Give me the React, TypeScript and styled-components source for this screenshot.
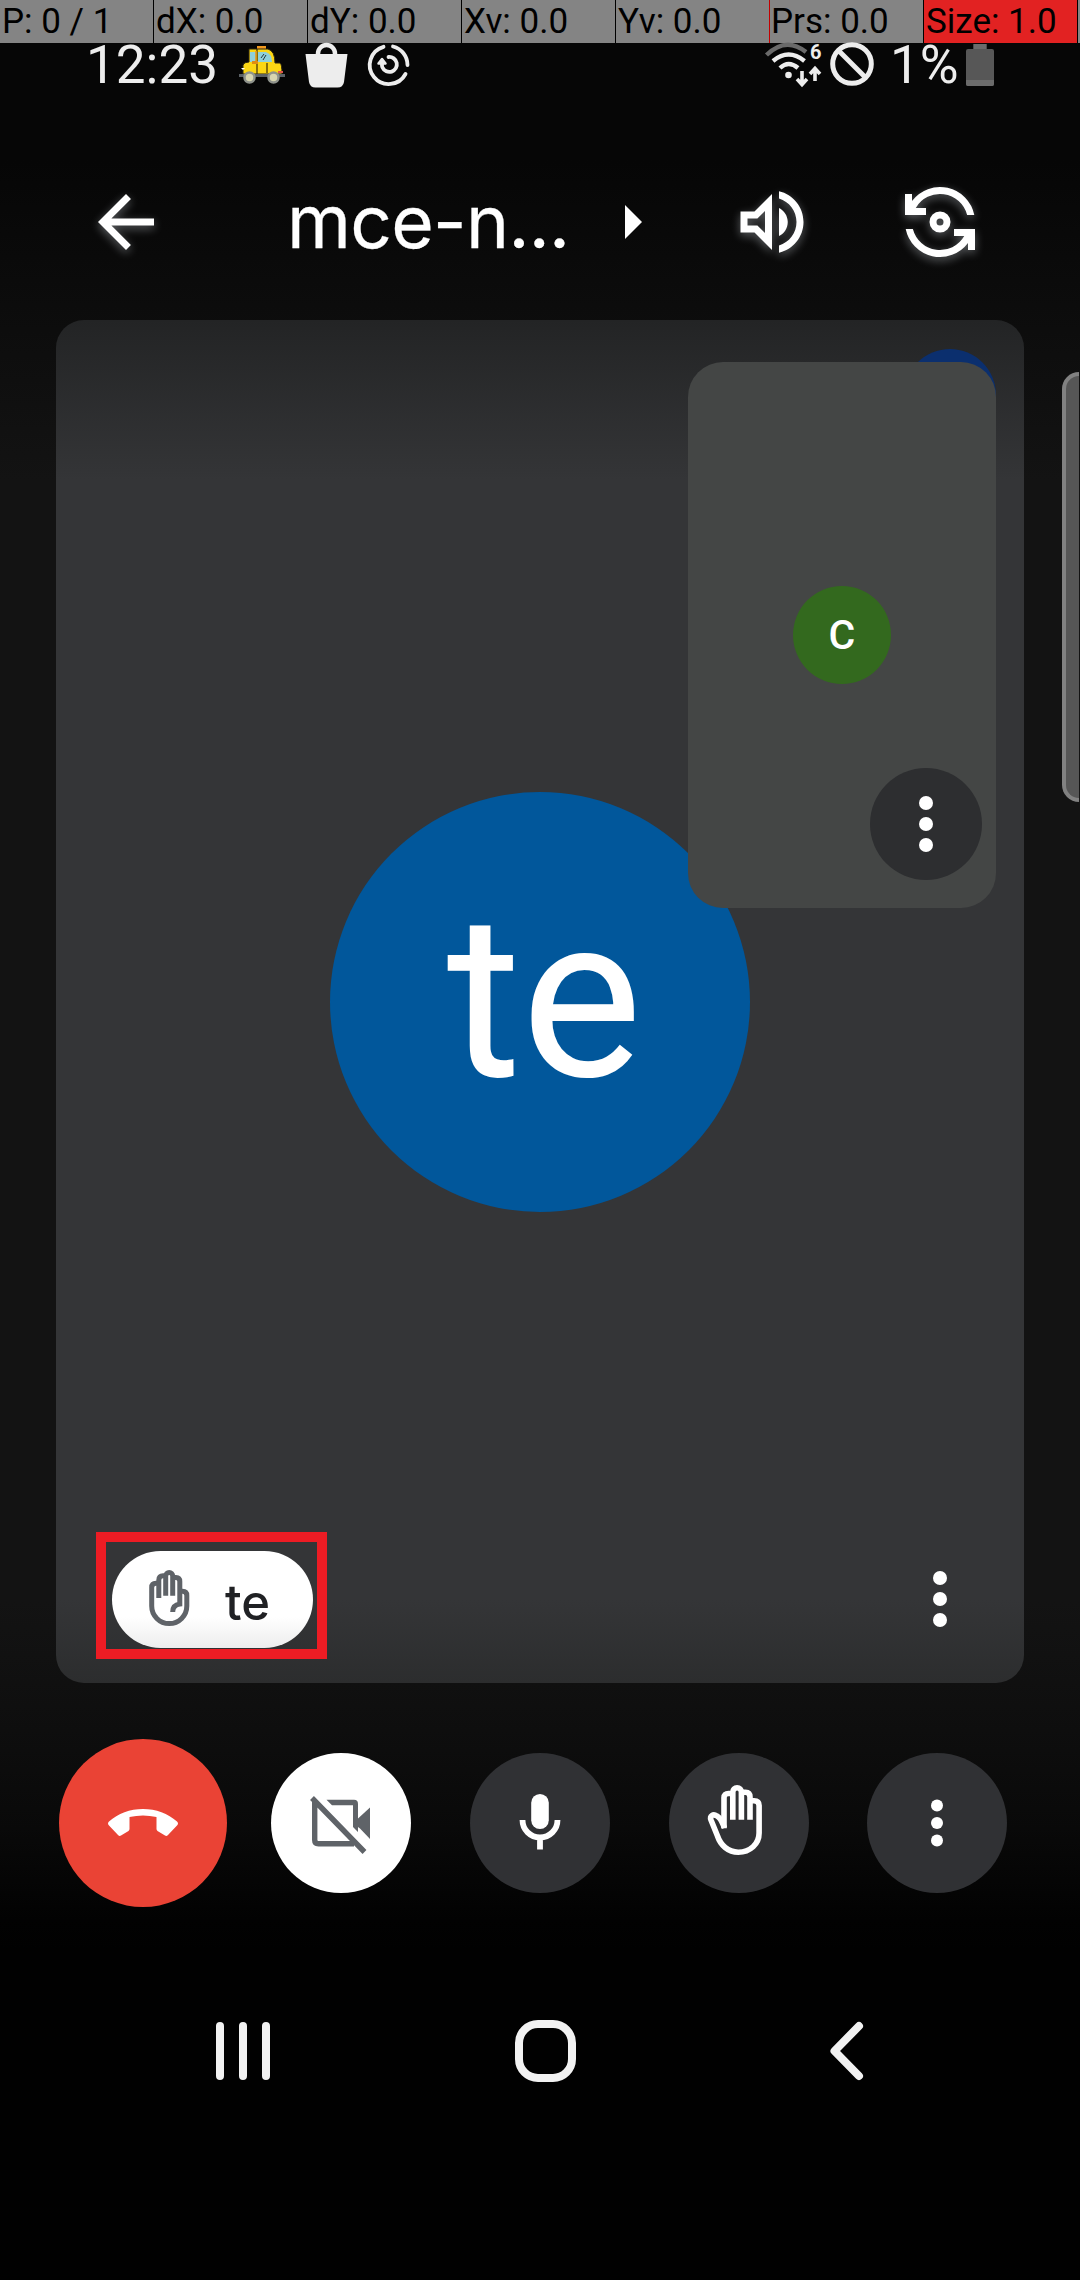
import React from "react";
import styled, { createGlobalStyle } from "styled-components";

const GlobalStyle = createGlobalStyle`
  * { box-sizing: border-box; }
  body { margin: 0; background: #000; }
  svg { display: block; flex: none; overflow: visible; }
`;

const Screen = styled.main`
  position: relative;
  display: flex;
  flex-direction: column;
  width: 1080px;
  height: 2280px;
  overflow: hidden;
  font-family: Roboto, "Liberation Sans", sans-serif;
  color: #fff;
  background: linear-gradient(
    to bottom,
    #060606 0,
    #060606 160px,
    #0d0d0d 330px,
    #131313 480px,
    #131313 1600px,
    #101010 1683px,
    #0e0e0e 1730px,
    #090909 1828px,
    #020202 1920px,
    #010101 1950px
  );
`;

const PointerBar = styled.div`
  display: grid;
  grid-template-columns: repeat(7, 153px) 1fr;
  column-gap: 1px;
  flex: none;
  height: 43px;
  background: #000;
`;

const PointerCell = styled.div<{ $alert?: boolean; $mark?: boolean }>`
  display: flex;
  align-items: center;
  padding-left: ${(p) => (p.$mark ? 1 : 2)}px;
  font-size: 35px;
  line-height: 42px;
  white-space: pre;
  color: #000;
  background: ${(p) => (p.$alert ? "#e22222" : "#848484")};
  box-shadow: ${(p) => (p.$mark ? "-1px 0 0 #c40000" : "none")};
`;

const StatusBar = styled.div`
  position: relative;
  display: flex;
  align-items: center;
  flex: none;
  height: 44px;
  padding: 0 86px;
  color: #ededed;
`;

const StatusText = styled.span<{ $width: number; $indent?: number }>`
  width: ${(p) => p.$width}px;
  padding-left: ${(p) => p.$indent ?? 0}px;
  font-size: 53px;
  line-height: 44px;
  white-space: nowrap;
`;

const StatusGroup = styled.div<{ $gap: number; $push?: boolean }>`
  display: flex;
  align-items: center;
  gap: ${(p) => p.$gap}px;
  margin-left: ${(p) => (p.$push ? "auto" : "0")};
`;

const Header = styled.header`
  display: flex;
  align-items: center;
  flex: none;
  height: 84px;
  margin-top: 93px;
  padding: 0 98px 0 84px;
`;

const GlowIcon = styled.svg`
  width: 84px;
  height: 84px;
  fill: #fff;
  filter: drop-shadow(0 3px 5px rgba(232, 240, 248, 0.38));
`;

const Title = styled.h1`
  width: 338px;
  margin: 0 0 0 119px;
  font-family: Inter, Roboto, sans-serif;
  font-size: 73px;
  font-weight: 400;
  letter-spacing: -0.7px;
  line-height: 84px;
  white-space: nowrap;
  -webkit-text-stroke: 0.3px #fff;
`;

const HeaderActions = styled.div`
  display: flex;
  gap: 84px;
  margin-left: auto;
`;

const Stage = styled.section`
  position: relative;
  display: grid;
  flex: none;
  width: 968px;
  height: 1363px;
  margin: 56px 0 0 56px;
  border-radius: 28px;
  background: linear-gradient(
    to bottom,
    #232425 0,
    #343537 160px,
    #343537 1280px,
    #2c2d2e 1363px
  );
`;

const Avatar = styled.div<{ $size: number; $color: string; $font: number; $indent?: number; $lift?: number; $weight?: number }>`
  display: flex;
  align-items: center;
  justify-content: center;
  grid-area: 1 / 1;
  place-self: center;
  width: ${(p) => p.$size}px;
  height: ${(p) => p.$size}px;
  padding: 0 0 ${(p) => p.$lift ?? 0}px ${(p) => p.$indent ?? 0}px;
  border-radius: 50%;
  background: ${(p) => p.$color};
  font-size: ${(p) => p.$font}px;
  font-weight: ${(p) => p.$weight ?? 400};
  line-height: 1;
`;

const StageFooter = styled.div`
  display: flex;
  align-items: center;
  justify-content: space-between;
  grid-area: 1 / 1;
  align-self: end;
  padding: 0 42px 24px 40px;
`;

const Highlight = styled.div`
  padding: 9px 4px 1px 6px;
  border: 10px solid #ed1c24;
`;

const NamePill = styled.div`
  display: flex;
  align-items: center;
  gap: 35px;
  width: 201px;
  height: 97px;
  padding-left: 37px;
  border-radius: 49px;
  background: linear-gradient(to bottom, #fff 68%, #ededed 100%);
`;

const PillName = styled.span`
  padding-top: 6px;
  font-family: Inter, Roboto, sans-serif;
  font-size: 49px;
  font-weight: 500;
  line-height: 60px;
  color: #202124;
`;

const SpeakingDot = styled.div`
  position: absolute;
  top: 29px;
  right: 28px;
  width: 92px;
  height: 92px;
  border-radius: 50%;
  background: #0b2f6e;
`;

const SelfView = styled.div`
  position: absolute;
  top: 42px;
  right: 28px;
  display: grid;
  width: 308px;
  height: 546px;
  border-radius: 35px;
  background: #444645;
`;

const SelfMenu = styled.button`
  display: flex;
  align-items: center;
  justify-content: center;
  grid-area: 1 / 1;
  place-self: end;
  width: 112px;
  height: 112px;
  margin: 0 14px 28px 0;
  padding: 0;
  border: 0;
  border-radius: 50%;
  background: #2d2e30;
`;

const DotsIcon = styled.svg<{ $drop?: number }>`
  width: 84px;
  height: 84px;
  margin-top: ${(p) => p.$drop ?? 0}px;
  fill: #fff;
`;

const EdgeHandle = styled.div`
  position: absolute;
  top: 372px;
  right: 1px;
  width: 17px;
  height: 430px;
  border: 4px solid #818181;
  border-right: 0;
  border-radius: 17px 0 0 17px;
  background: #565656;
`;

const CallControls = styled.div`
  display: flex;
  align-items: center;
  flex: none;
  gap: 58.8px;
  height: 168px;
  margin-top: 56px;
  padding-left: 59px;
`;

const CallButton = styled.button<{ $tone?: "end" | "light" }>`
  display: flex;
  align-items: center;
  justify-content: center;
  flex: none;
  width: ${(p) => (p.$tone === "end" ? 168 : 140)}px;
  height: ${(p) => (p.$tone === "end" ? 168 : 140)}px;
  margin-right: ${(p) => (p.$tone === "end" ? -14.8 : 0)}px;
  padding: 0;
  border: 0;
  border-radius: 50%;
  background: ${(p) => (p.$tone === "end" ? "#ea4335" : p.$tone === "light" ? "#fff" : "#303134")};
`;

const LineIcon = styled.svg<{ $color: string; $stroke: number; $dx?: number; $dy?: number }>`
  fill: none;
  stroke: ${(p) => p.$color};
  stroke-width: ${(p) => p.$stroke}px;
  margin: ${(p) => p.$dy ?? 0}px 0 0 ${(p) => p.$dx ?? 0}px;
`;

const HangupIcon = styled.svg`
  margin-bottom: 2px;
  fill: #fff;
`;

const NavBar = styled.nav`
  display: flex;
  align-items: center;
  flex: none;
  height: 80px;
  margin-top: 104px;
  padding-left: 216px;
`;

const NavIcon = styled.svg<{ $before?: number }>`
  margin-left: ${(p) => p.$before ?? 0}px;
  fill: none;
  stroke: #f2f2f2;
  stroke-width: 8px;
  stroke-linecap: round;
  stroke-linejoin: round;
`;

const POINTER = ["P: 0 / 1", "dX: 0.0", "dY: 0.0", "Xv: 0.0", "Yv: 0.0", "Prs: 0.0", "Size: 1.0"];

const Dots = ({ drop }: { drop?: number }) => (
  <DotsIcon viewBox="0 0 24 24" $drop={drop}>
    <circle cx="12" cy="6" r="2" />
    <circle cx="12" cy="12" r="2" />
    <circle cx="12" cy="18" r="2" />
  </DotsIcon>
);

const Taxi = () => (
  <svg width="46" height="38" viewBox="0 0 46 38">
    <path d="M18 0h9v4h-9z" fill="#f39a1e" />
    <path d="M10 3H29Q36 5 36 17H41Q43 18 43 28H4V19Q5 16 10 16Z" fill="#fbd614" stroke="#2a2410" strokeWidth="1" />
    <path d="M11 6h6v10h-6zM19 6h8q6 2 6 10H19z" fill="#8fd0dc" />
    <path d="M18 3v25M28 17v10" stroke="#3b2c08" strokeWidth="1.2" />
    <path d="M17 5v11" stroke="#e79a1d" strokeWidth="1.6" />
    <path d="M22 12l3-4M24 14l3-5" stroke="#28353a" strokeWidth="1" />
    <path d="M13 15h6v3h-6z" fill="#e08c12" />
    <path d="M2 22h4l-2 2z" fill="#fff" />
    <path d="M39 25h5v2h-5z" fill="#e2554d" />
    <path d="M0 28h46v3H0z" fill="#5b6166" />
    <circle cx="10.500" cy="31.500" r="5" fill="#d8d6b0" stroke="#8f938c" strokeWidth="2.500" />
    <circle cx="34.500" cy="31.500" r="5" fill="#d8d6b0" stroke="#8f938c" strokeWidth="2.500" />
  </svg>
);

const Bag = () => (
  <svg width="43" height="46" viewBox="0 0 42 46">
    <path d="M0 12H42L38.500 40Q37.500 45.500 32 45.500H10Q4.500 45.500 3.500 40Z" fill="#ededed" />
    <path d="M12.500 13V11.500A8.500 8.500 0 0 1 29.500 11.500V13" fill="none" stroke="#ededed" strokeWidth="4.500" />
  </svg>
);

const SyncCircle = () => (
  <svg width="42" height="42" viewBox="0 0 42 42" fill="none" stroke="#ededed" strokeWidth="3.800" strokeLinecap="round">
    <path d="M15.500 2.800A19 19 0 1 0 37.500 30" />
    <path d="M25 2.500A19 19 0 0 1 39.500 21" />
    <path d="M20.500 13A7.500 7.500 0 1 1 14.500 23.500" />
    <path d="M10.500 19.500L14 15L17.500 19.500Z" fill="#ededed" strokeLinejoin="round" strokeWidth="2.500" />
    <path d="M14 17.500V22" />
  </svg>
);

const Wifi = () => (
  <svg width="57" height="44" viewBox="0 0 57 44" fill="none" stroke="#ededed" strokeWidth="4.400">
    <path d="M1.500 12Q21 -7 41 9" stroke="#6a6a6a" />
    <path d="M8 18Q23.500 5 39.500 18" />
    <path d="M15 25Q23.500 17 33 25" />
    <circle cx="23.500" cy="32" r="3.300" fill="#ededed" stroke="none" />
    <path d="M37 28V41M32 36L37 41.500L42 36" strokeWidth="3.600" />
    <path d="M50 38V26M45 31L50 25.500L55 31" strokeWidth="3.600" />
    <text x="45" y="16" fontSize="20" fontWeight="700" fill="#ededed" stroke="none">6</text>
  </svg>
);

const NoEntry = () => (
  <svg width="44" height="44" viewBox="0 0 44 44" fill="none" stroke="#ededed" strokeWidth="5">
    <circle cx="22" cy="21" r="19.300" />
    <path d="M8.500 7.500L35.500 34.500" />
  </svg>
);

const Battery = () => (
  <svg width="28" height="42" viewBox="0 0 28 42">
    <path d="M7.500 0H20.500V5H26Q28 5 28 7V40Q28 42 26 42H2Q0 42 0 40V7Q0 5 2 5H7.500Z" fill="#575757" />
    <path d="M7.500 0H20.500V5H7.500ZM0 36H28V40Q28 42 26 42H2Q0 42 0 40Z" fill="#6b6b6b" />
  </svg>
);

export default function App() {
  return (
    <>
      <GlobalStyle />
      <Screen>
        <PointerBar>
          {POINTER.map((label, i) => (
            <PointerCell key={label} $alert={i === 6} $mark={i === 5}>
              {label}
            </PointerCell>
          ))}
          <PointerCell />
        </PointerBar>

        <StatusBar>
          <StatusText $width={153}>12:23</StatusText>
          <StatusGroup $gap={20}>
            <Taxi />
            <Bag />
            <SyncCircle />
          </StatusGroup>
          <StatusGroup $gap={8} $push>
            <Wifi />
            <NoEntry />
            <StatusText $width={76} $indent={8}>
              1%
            </StatusText>
            <Battery />
          </StatusGroup>
        </StatusBar>

        <Header>
          <GlowIcon viewBox="0 0 24 24">
            <path d="M20 11H7.830l5.590-5.590L12 4l-8 8 8 8 1.410-1.410L7.830 13H20v-2z" />
          </GlowIcon>
          <Title>mce-n...</Title>
          <svg width="17" height="34" viewBox="0 0 17 34" fill="#fff">
            <path d="M0 0L17 17L0 34Z" />
          </svg>
          <HeaderActions>
            <GlowIcon viewBox="0 0 24 24">
              <path d="M3 9v6h4l5 5V4L7 9H3zm7-.17v6.340L7.830 13H5v-2h2.830L10 8.830z" fillRule="evenodd" />
              <path d="M16.500 12c0-1.770-1.020-3.290-2.500-4.030v8.050c1.480-.73 2.500-2.250 2.500-4.020zM14 3.230v2.060c2.890.86 5 3.540 5 6.710s-2.110 5.850-5 6.710v2.060c4.010-.91 7-4.490 7-8.770s-2.990-7.860-7-8.770z" />
            </GlowIcon>
            <GlowIcon viewBox="0 0 24 24">
              <path d="M21.800 10A10 10 0 0 0 4 6V4H2V10H8V8H5.070A8 8 0 0 1 19.750 10Z" />
              <path d="M2.200 14A10 10 0 0 0 20 18V20H22V14H16V16H18.930A8 8 0 0 1 4.250 14Z" />
              <path d="M12 9a3 3 0 1 0 0 6a3 3 0 1 0 0-6zm0 2a1 1 0 1 1 0 2a1 1 0 1 1 0-2z" fillRule="evenodd" />
            </GlowIcon>
          </HeaderActions>
        </Header>

        <Stage>
          <Avatar $size={420} $color="#01579b" $font={228} $indent={9} $lift={7}>
            te
          </Avatar>
          <StageFooter>
            <Highlight>
              <NamePill>
                <LineIcon $color="#5f6368" $stroke={5} $dy={-3} width="41" height="56" viewBox="0 0 41 56">
                  <path d="M9.800 13.300H7Q2.700 13.300 2.700 17.500V36A17.500 17.500 0 0 0 37.800 36V25.500Q37.800 21.300 33.500 21.300H30.800" />
                  <path d="M9.800 28V10Q9.800 5.800 14 5.800H16.700M16.700 25.700V6A3.500 3.500 0 0 1 23.700 6V25.700" />
                  <path d="M23.700 7.500H27Q30.800 7.500 30.800 11.500V34Q23.700 35 23.700 42" />
                </LineIcon>
                <PillName>te</PillName>
              </NamePill>
            </Highlight>
            <Dots drop={7} />
          </StageFooter>
          <SpeakingDot />
          <SelfView>
            <Avatar $size={98} $color="#33691e" $font={41} $weight={500}>
              C
            </Avatar>
            <SelfMenu>
              <Dots />
            </SelfMenu>
          </SelfView>
        </Stage>

        <EdgeHandle />

        <CallControls>
          <CallButton $tone="end">
            <HangupIcon width="70" height="27" viewBox="0 0 70 27">
              <path d="M1 12.500C10 4.500 22 0 35 0S60 4.500 69 12.500Q71 14.500 69 16.500L60 26Q58.500 27.500 57 26.500L49.500 22Q48.500 21 48.500 20V8Q35 5 21.500 8V20Q21.500 21 20.500 22L13 26.500Q11.500 27.500 10 26L1 16.500Q-1 14.500 1 12.500Z" />
            </HangupIcon>
          </CallButton>
          <CallButton $tone="light">
            <LineIcon $color="#5f6368" $stroke={5.4} $dx={-3} $dy={4} width="60" height="58" viewBox="0 0 60 58">
              <path d="M4.700 6V44Q4.700 47.800 8.500 47.800H44M2 2L54.500 56" />
              <path
                d="M16.500 3.800H44Q48 3.800 48 8V22.500L60 11.500V43L50 32.500L48 31V36L43 31V9.300H22Z"
                fill="#5f6368"
                stroke="none"
              />
            </LineIcon>
          </CallButton>
          <CallButton>
            <LineIcon $color="#fff" $stroke={5.8} $dy={-3} width="42" height="56" viewBox="0 0 42 56">
              <rect x="12.200" y="0" width="17.600" height="35" rx="8.800" fill="#fff" stroke="none" />
              <path d="M3.500 26A17.500 17.500 0 0 0 38.500 26M21 43V55.500" />
            </LineIcon>
          </CallButton>
          <CallButton>
            <LineIcon $color="#fff" $stroke={5.6} $dx={-7} $dy={-6} width="55" height="70" viewBox="0 0 55 70">
              <path d="M16 43.300V12.500Q16 8.500 20.500 8.500H24.800M24.800 34.700V7A4.300 4.300 0 0 1 33.400 7V34.700" />
              <path d="M33.400 7.200H37.500Q42 7.200 42 12V34.700M42 15.700H46Q51.100 15.700 51.100 20.500V48C51.100 59 42 67.200 30.300 67.200C20 67.200 12.500 60 9.500 51L3 35C1.500 31 5 28.500 9 31C13 33 14 37 16.500 43" />
            </LineIcon>
          </CallButton>
          <CallButton>
            <DotsIcon viewBox="0 0 84 84">
              <circle cx="42" cy="24.500" r="6" />
              <circle cx="42" cy="42" r="6" />
              <circle cx="42" cy="59.500" r="6" />
            </DotsIcon>
          </CallButton>
        </CallControls>

        <NavBar>
          <NavIcon width="54" height="58" viewBox="0 0 54 58">
            <path d="M4 4V54M27 4V54M50 4V54" />
          </NavIcon>
          <NavIcon $before={244.5} width="61" height="62" viewBox="0 0 61 62">
            <rect x="4" y="4" width="53" height="54" rx="19" />
          </NavIcon>
          <NavIcon $before={253.5} width="35" height="58" viewBox="0 0 35 58">
            <path d="M30 4L5.500 29L30 54" />
          </NavIcon>
        </NavBar>
      </Screen>
    </>
  );
}
